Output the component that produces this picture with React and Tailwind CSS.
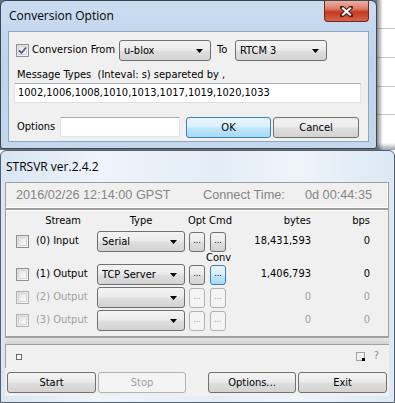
import React from "react";

const Arrow = ({ gray }) => (
  <svg width="7" height="4" viewBox="0 0 7 4" className="shrink-0">
    <path d="M0 0H7L3.5 4Z" fill={gray ? "#a0a0a0" : "#000"} />
  </svg>
);

function Combo({ className = "", text }) {
  return (
    <div
      className={`flex h-[21px] items-center justify-between rounded-[3px] border border-[#707070] bg-[linear-gradient(#f3f3f3,#ececec_45%,#dedede_55%,#d3d3d3)] pl-[4px] pr-[7px] ${className}`}
    >
      <span className="truncate leading-none">{text}</span>
      <Arrow />
    </div>
  );
}

function Btn({ className = "", children, disabled, focus }) {
  const look = disabled
    ? "border-[#adb2b5] bg-[#f4f4f4] text-[#a0a0a0]"
    : focus
    ? "border-[#3c7fb1] bg-[linear-gradient(#eaf6fd,#d9f0fc_45%,#bee6fd_55%,#a7d9f5)] text-black"
    : "border-[#707070] bg-[linear-gradient(#f3f3f3,#ececec_45%,#dedede_55%,#d3d3d3)] text-black";
  return (
    <div
      className={`flex items-center justify-center rounded-[3px] border leading-none ${look} ${className}`}
    >
      {children}
    </div>
  );
}

function Dots({ disabled, focus }) {
  return (
    <Btn disabled={disabled} focus={focus} className="h-[20px] w-[16px] text-[9px]">
      <span className="-mt-[2px]">...</span>
    </Btn>
  );
}

function Check({ checked, disabled }) {
  return (
    <div
      className={`flex h-[13px] w-[13px] shrink-0 items-center justify-center border ${
        disabled ? "border-[#b1b1b1]" : "border-[#8f8f8f]"
      } bg-[linear-gradient(135deg,#dedede,#fbfbfb)]`}
    >
      <div className="h-[9px] w-[9px] border border-[#d2d4d6] bg-[linear-gradient(135deg,#e4e4e4,#fafafa)]">
        {checked && (
          <svg width="9" height="9" viewBox="0 0 9 9" className="-ml-[1px] -mt-[1px] block">
            <path d="M1 4.5L3.5 7L8 1.5" stroke="#4a5f8c" strokeWidth="1.8" fill="none" />
          </svg>
        )}
      </div>
    </div>
  );
}

function Row({ label, type, disabled, focus, bytes, bps }) {
  return (
    <div className="flex h-[21px] items-center pl-[10px]">
      <Check disabled={disabled} />
      <div className={`ml-[7px] w-[61px] whitespace-nowrap ${disabled ? "text-[#a0a0a0]" : "text-black"}`}>{label}</div>
      <Combo className="w-[88px]" text={type} />
      <div className="ml-[4px]">
        <Dots disabled={disabled} />
      </div>
      <div className="ml-[5px]">
        <Dots disabled={disabled} focus={focus} />
      </div>
      <div className={`w-[85px] text-right ${disabled ? "text-[#a0a0a0]" : "text-black"}`}>{bytes}</div>
      <div className={`w-[59px] text-right ${disabled ? "text-[#a0a0a0]" : "text-black"}`}>{bps}</div>
    </div>
  );
}

export default function App() {
  return (
    <div className="h-[403px] w-[395px] overflow-hidden bg-white font-['DejaVu_Sans_Condensed','Liberation_Sans',sans-serif] text-[11px] text-black">
      {/* top area with dialog */}
      <div className="flex h-[150px] bg-[#6b6f75]">
        <div className="flex h-[149px] w-[377px] shrink-0 flex-col rounded-t-[6px] rounded-b-[3px] border border-[#3b4653] bg-[linear-gradient(#cadcf0,#bfd4eb_40%,#c3d7ed)]">
          <div className="flex h-[30px] items-start">
            <span className="ml-[8px] mt-[6px] font-['Open_Sans',sans-serif] text-[12px] text-[#000]">
              Conversion Option
            </span>
            <div className="ml-auto mr-[7px] flex h-[21px] w-[45px] items-center justify-center rounded-b-[4px] border border-t-0 border-[#6d2a20] bg-[linear-gradient(#eeb0a2,#dc7a66_40%,#c5381f_55%,#d5654c)]">
              <svg width="13" height="11" viewBox="0 0 13 11">
                <path d="M2 1.5L11 9.5M11 1.5L2 9.5" stroke="#4a1a12" strokeWidth="4" strokeLinecap="square" />
                <path d="M2.2 1.7L10.8 9.3M10.8 1.7L2.2 9.3" stroke="#fff" strokeWidth="2.2" />
              </svg>
            </div>
          </div>
          <div className="ml-[7px] flex h-[111px] w-[361px] flex-col border border-[#8ea6c1] bg-[#f0f0f0]">
            <div className="mt-[8px] flex h-[21px] items-center">
              <div className="ml-[7px]">
                <Check checked />
              </div>
              <div className="ml-[3px] w-[87px]">Conversion From</div>
              <Combo className="w-[92px]" text="u-blox" />
              <div className="ml-[6px] w-[18px]">To</div>
              <Combo className="w-[92px]" text="RTCM 3" />
            </div>
            <div className="ml-[8px] mt-[7px] h-[14px] leading-[14px]">
              Message Types&nbsp; (Inteval: s) separeted by ,
            </div>
            <div className="ml-[5px] mt-[1px] flex h-[20px] w-[347px] items-center border border-[#e2e3ea] border-t-[#abadb3] bg-white pl-[3px]">
              1002,1006,1008,1010,1013,1017,1019,1020,1033
            </div>
            <div className="mt-[13px] flex items-center">
              <div className="ml-[8px] w-[43px]">Options</div>
              <div className="h-[20px] w-[120px] border border-[#e2e3ea] border-t-[#abadb3] bg-white" />
              <Btn focus className="ml-[6px] mt-[1px] h-[21px] w-[85px]">OK</Btn>
              <Btn className="ml-[2px] mt-[1px] h-[21px] w-[86px]">Cancel</Btn>
            </div>
          </div>
        </div>
        <div className="relative flex flex-1 flex-col bg-white">
          <div className="h-[29px] shrink-0 border-b border-[#c8c8c8]" />
          <div className="h-[29px] shrink-0 border-b border-[#c8c8c8]" />
          <div className="h-[29px] shrink-0 border-b border-[#c8c8c8]" />
          <div className="h-[28px] shrink-0 border-b border-[#c8c8c8]" />
          <div className="flex-1 bg-[linear-gradient(#fff,#fff_80%,#9a9ea4)]" />
          <div className="absolute inset-y-0 left-0 w-[6px] bg-[linear-gradient(90deg,rgba(0,0,0,0.45),rgba(0,0,0,0))]" />
        </div>
      </div>

      {/* STRSVR window */}
      <div className="flex h-[253px] flex-col rounded-t-[6px] border border-[#55606c] bg-[linear-gradient(90deg,#d9e6f3,#eef4fa_25%,#e4edf7_55%,#eef4fa_75%,#dce8f4)]">
        <div className="flex h-[31px] shrink-0 items-center pl-[5px] font-['Open_Sans',sans-serif] text-[12px] text-black">
          STRSVR ver.2.4.2
        </div>
        <div className="ml-[4px] flex h-[214px] w-[384px] flex-col bg-[#f0f0f0]">
          {/* time panel */}
          <div className="flex h-[27px] shrink-0 items-center border border-[#a0a0a0] pl-[10px] pr-[16px] font-['Liberation_Sans',sans-serif] text-[12.7px] text-[#858585] shadow-[inset_-1px_-1px_0_#fff]">
            <span className="w-[187px] whitespace-nowrap">2016/02/26 12:14:00 GPST</span>
            <span className="whitespace-nowrap">Connect Time:</span>
            <span className="ml-auto whitespace-nowrap">0d 00:44:35</span>
          </div>
          {/* stream panel */}
          <div className="flex h-[128px] shrink-0 flex-col border border-[#a0a0a0] pt-[3px] shadow-[inset_1px_1px_0_#fff]">
            <div className="flex h-[16px] items-center whitespace-nowrap">
              <div className="w-[91px] pr-[16px] text-right">Stream</div>
              <div className="w-[88px] text-center">Type</div>
              <div className="ml-[3px] w-[41px] whitespace-nowrap">Opt Cmd</div>
              <div className="w-[82px] text-right">bytes</div>
              <div className="w-[59px] text-right">bps</div>
            </div>
            <div className="mt-[2px]">
              <Row label="(0) Input" type="Serial" bytes="18,431,593" bps="0" />
            </div>
            <div className="h-[12px] pl-[200px] leading-[12px]">Conv</div>
            <Row label="(1) Output" type="TCP Server" focus bytes="1,406,793" bps="0" />
            <div className="mt-[2px]">
              <Row label="(2) Output" type="" disabled bytes="0" bps="0" />
            </div>
            <div className="mt-[2px]">
              <Row label="(3) Output" type="" disabled bytes="0" bps="0" />
            </div>
          </div>
          {/* splitter band */}
          <div className="h-[8px] shrink-0 border-y border-[#a0a0a0] bg-[linear-gradient(#e6e6e6,#d2d2d2)]" />
          {/* status panel */}
          <div className="flex h-[23px] shrink-0 items-center border-l border-[#a0a0a0] pl-[10px] pr-[10px]">
            <div className="h-[6px] w-[6px] border border-[#6a6a6a] bg-white" />
            <svg width="10" height="10" viewBox="0 0 10 10" className="ml-auto">
              <rect x="0.5" y="0.5" width="8" height="8" fill="none" stroke="#555" strokeDasharray="1 1" />
              <rect x="6" y="6" width="3" height="3" fill="#000" />
            </svg>
            <span className="ml-[8px] text-[#a38282]">?</span>
          </div>
          {/* buttons */}
          <div className="mt-[4px] flex h-[21px] shrink-0 pl-[2px]">
            <Btn className="h-[21px] w-[89px]">Start</Btn>
            <Btn disabled className="ml-[2px] h-[21px] w-[88px]">Stop</Btn>
            <Btn className="ml-[22px] h-[21px] w-[88px]">Options...</Btn>
            <Btn className="ml-[2px] h-[21px] w-[89px]">Exit</Btn>
          </div>
        </div>
      </div>
    </div>
  );
}
